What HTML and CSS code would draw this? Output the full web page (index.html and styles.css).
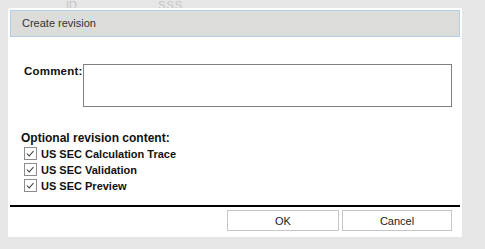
FILE: index.html
```html
<!DOCTYPE html>
<html lang="en">
<head>
    <meta charset="UTF-8">
    <meta name="viewport" content="width=device-width, initial-scale=1.0">
    <title>Create revision</title>
    <link rel="stylesheet" href="styles.css">
</head>
<body>
    <div class="backdrop">
        <span class="backdrop-id">ID</span>
        <span class="backdrop-name">SSS</span>
    </div>

    <div class="dialog">
        <div class="dialog-header">Create revision</div>

        <div class="comment-row">
            <label class="comment-label" for="comment">Comment:</label>
            <textarea class="comment-box" id="comment"></textarea>
        </div>

        <div class="options">
            <div class="options-title">Optional revision content:</div>
            <label class="option">
                <svg class="check" width="13" height="13" viewBox="0 0 13 13">
                    <rect x="0.5" y="0.5" width="12" height="12" fill="#fff" stroke="#8d8d8d"/>
                    <path d="M3 6.5 L5.2 9 L9.5 4" fill="none" stroke="#333" stroke-width="1.1"/>
                </svg>
                US SEC Calculation Trace
            </label>
            <label class="option">
                <svg class="check" width="13" height="13" viewBox="0 0 13 13">
                    <rect x="0.5" y="0.5" width="12" height="12" fill="#fff" stroke="#8d8d8d"/>
                    <path d="M3 6.5 L5.2 9 L9.5 4" fill="none" stroke="#333" stroke-width="1.1"/>
                </svg>
                US SEC Validation
            </label>
            <label class="option">
                <svg class="check" width="13" height="13" viewBox="0 0 13 13">
                    <rect x="0.5" y="0.5" width="12" height="12" fill="#fff" stroke="#8d8d8d"/>
                    <path d="M3 6.5 L5.2 9 L9.5 4" fill="none" stroke="#333" stroke-width="1.1"/>
                </svg>
                US SEC Preview
            </label>
        </div>

        <div class="dialog-footer">
            <button class="btn btn-ok">OK</button>
            <button class="btn btn-cancel">Cancel</button>
        </div>
    </div>
</body>
</html>
```

FILE: styles.css
```css
body {
    margin: 0;
    background-color: #e6e6e6;
    font-family: "Liberation Sans", Arial, sans-serif;
    color: #111;
}
.backdrop {
    height: 8px;
    overflow: hidden;
    font-size: 11px;
    line-height: 11px;
    color: #c4c4c4;
}
.backdrop span {
    display: inline-block;
    margin-top: -6px;
}
.backdrop-id {
    margin-left: 66px;
}
.backdrop-name {
    margin-left: 78px;
    letter-spacing: 1px;
}
.dialog {
    margin-left: 8px;
    width: 454px;
    padding: 2px 2px 6px 2px;
    box-sizing: border-box;
    background-color: #fff;
}
.dialog-header {
    height: 25px;
    line-height: 25px;
    padding-left: 11px;
    background-color: #dcdcdb;
    border: 1px solid #b3cfe8;
    font-size: 11px;
    color: #333;
}
.comment-row {
    display: flex;
    align-items: flex-start;
    margin-top: 27px;
    padding-left: 14px;
    padding-right: 8px;
}
.comment-label {
    width: 59px;
    font-size: 11.5px;
    line-height: 14px;
    font-weight: bold;
    letter-spacing: 0.2px;
}
.comment-box {
    flex: 1;
    height: 43px;
    margin: 0;
    padding: 2px;
    box-sizing: border-box;
    border: 1px solid #808080;
    resize: none;
    font-family: inherit;
}
.options {
    margin-top: 24px;
    padding-left: 11px;
    font-weight: bold;
}
.options-title {
    font-size: 12px;
    line-height: 14px;
    margin-bottom: 1px;
}
.option {
    display: flex;
    align-items: flex-start;
    gap: 4px;
    height: 16px;
    padding-left: 3px;
    font-size: 11px;
    line-height: 16px;
}
.check {
    margin-top: 1px;
    flex-shrink: 0;
}
.dialog-footer {
    display: flex;
    justify-content: flex-end;
    gap: 3px;
    margin-top: 11px;
    padding-top: 3px;
    padding-right: 8px;
    border-top: 2px solid #000;
}
.btn {
    height: 21px;
    padding: 0;
    background-color: #fff;
    border: 1px solid #c6c6c6;
    font-family: inherit;
    font-size: 11px;
    color: #222;
}
.btn-ok {
    width: 112px;
}
.btn-cancel {
    width: 110px;
}
```
